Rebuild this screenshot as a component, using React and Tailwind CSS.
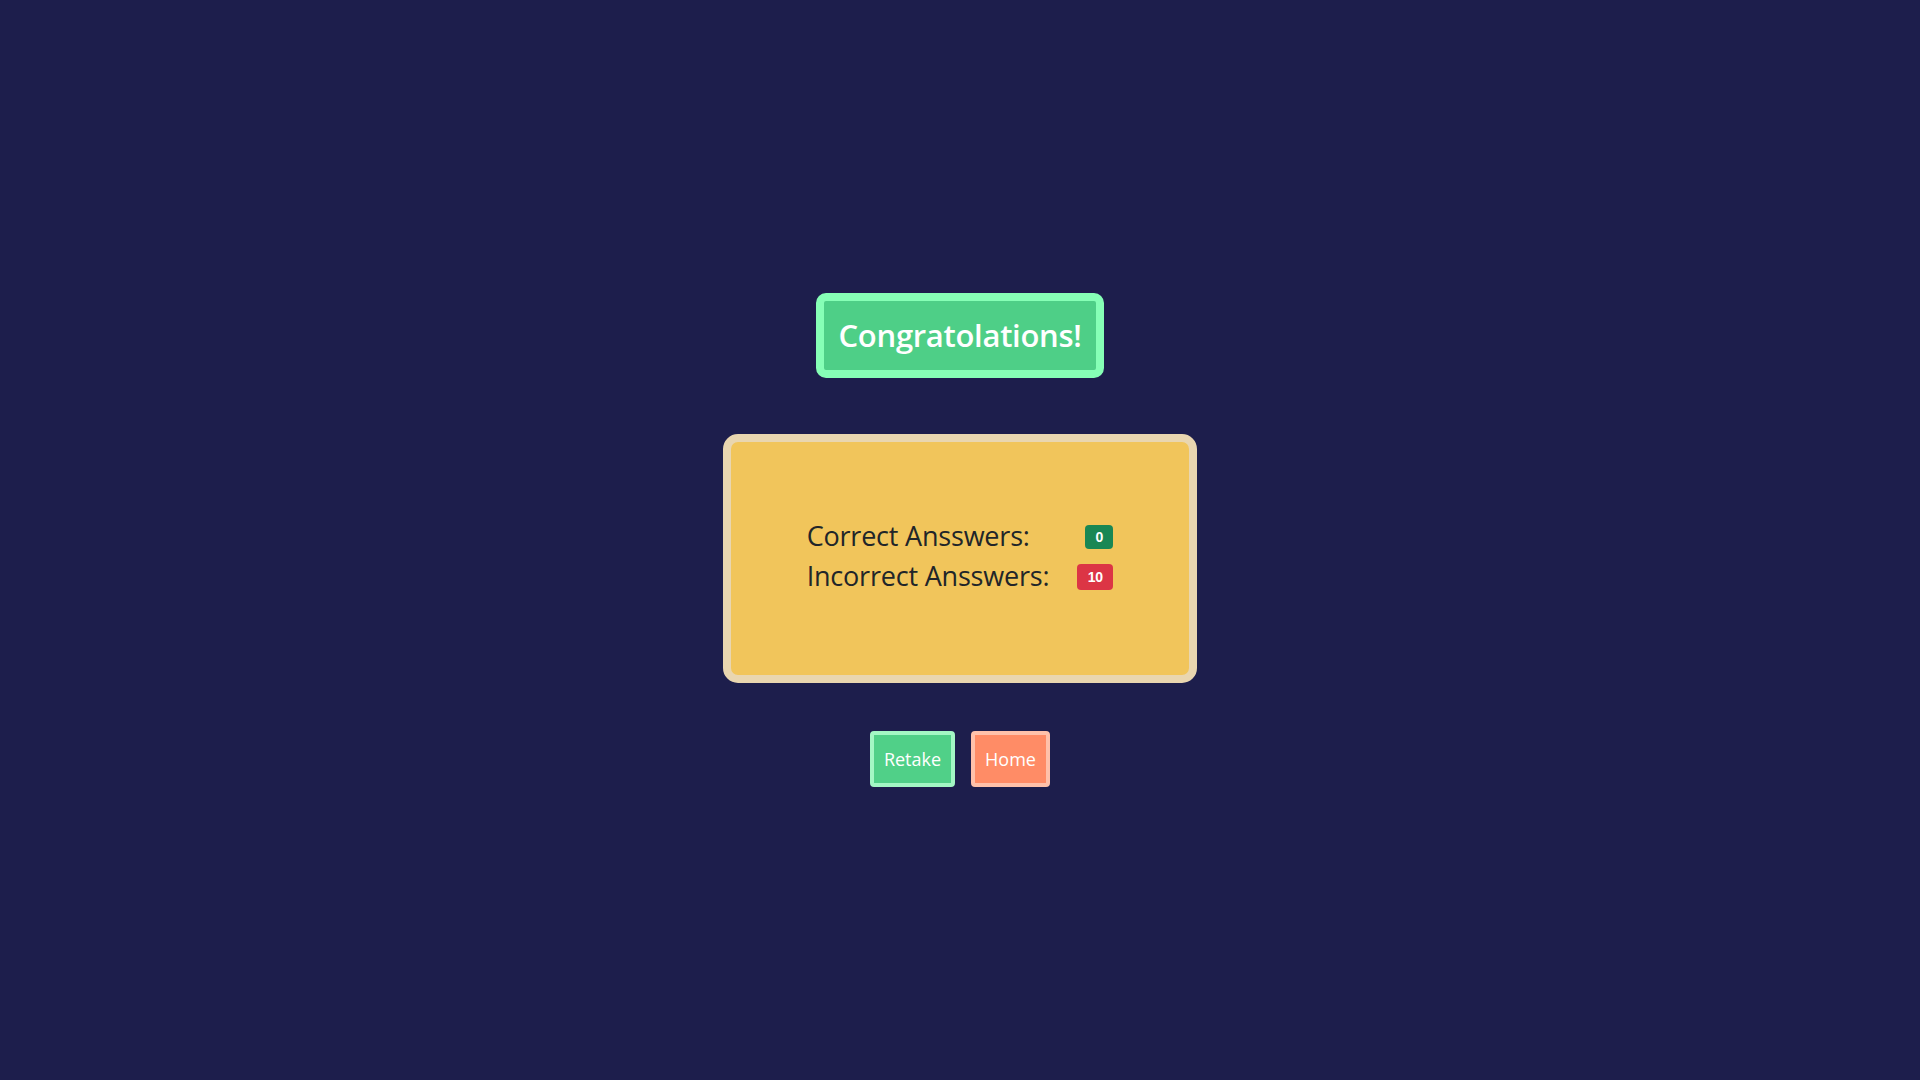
export default function App() {
  return (
    <div className="min-h-screen w-full bg-[#1d1e4c] flex flex-col items-center justify-center" style={{ fontFamily: '"Open Sans", "Noto Sans", sans-serif' }}>
      <div className="h-[85px] px-[15px] flex items-center justify-center rounded-[10px] border-[8px] border-[#86ffb6] bg-[#4ecf87]">
        <h1 className="text-[31px] font-semibold text-white leading-none tracking-[-0.3px]">Congratolations!</h1>
      </div>
      <div className="mt-[56px] w-[474px] h-[249px] rounded-[15px] border-[8px] border-[#e9d6b0] bg-[#f1c55b] flex items-center justify-center pb-[6px]">
        <div className="grid grid-cols-[auto_auto] gap-x-[28px] items-center text-[#212529] text-[27px] leading-[40px] tracking-[-0.2px]">
          <span>Correct Ansswers:</span>
          <span className="justify-self-end mt-[3px] h-[24px] w-[28px] rounded-[4px] bg-[#198754] text-white text-[14px] font-bold flex items-center justify-center" style={{ fontFamily: '"Liberation Sans", Arial, sans-serif' }}>0</span>
          <span>Incorrect Ansswers:</span>
          <span className="justify-self-end mt-[3px] h-[26px] w-[36px] rounded-[4px] bg-[#dc3545] text-white text-[14px] font-bold flex items-center justify-center" style={{ fontFamily: '"Liberation Sans", Arial, sans-serif' }}>10</span>
        </div>
      </div>
      <div className="mt-[48px] flex gap-[16px]">
        <button className="h-[56px] w-[85px] rounded-[4px] border-[4px] border-[#a3f7c4] bg-[#50d088] text-white text-[18px] flex items-center justify-center">Retake</button>
        <button className="h-[56px] w-[79px] rounded-[4px] border-[4px] border-[#ffc1aa] bg-[#ff8c66] text-white text-[18px] flex items-center justify-center">Home</button>
      </div>
    </div>
  );
}
